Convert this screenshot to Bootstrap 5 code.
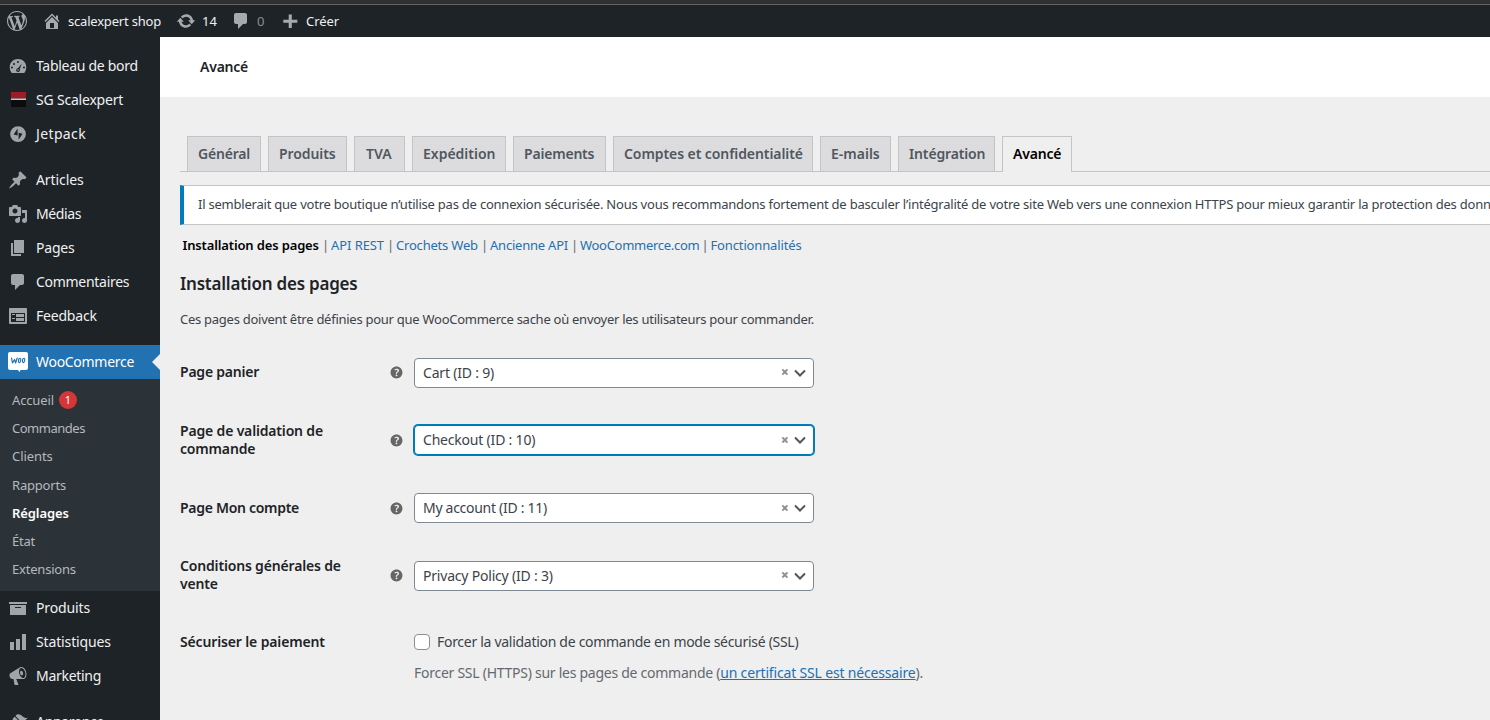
<!DOCTYPE html>
<html lang="fr">
<head>
<meta charset="utf-8">
<meta name="viewport" content="width=device-width, initial-scale=1">
<title>Réglages WooCommerce</title>
<link href="https://cdn.jsdelivr.net/npm/bootstrap@5.3.0/dist/css/bootstrap.min.css" rel="stylesheet">
<style>
  body { font-family: "Noto Sans", "Open Sans", sans-serif; font-size: 13px; line-height: 18px; color: #3c434a; background: #efefef; height: 720px; overflow: hidden; letter-spacing: -.22px; white-space: nowrap; }
  a { color: #2271b1; text-decoration: none; }
  svg { display: block; flex: none; fill: currentColor; }
  /* letter tracking steps */
  .trk-p { letter-spacing: .37px; }
  .trk-0 { letter-spacing: 0; }
  .trk-1 { letter-spacing: -.08px; }
  .trk-2 { letter-spacing: -.14px; }
  .trk-25 { letter-spacing: -.17px; }
  .trk-3 { letter-spacing: -.2px; }
  .trk-35 { letter-spacing: -.265px; }
  .trk-4 { letter-spacing: -.29px; }
  .trk-5 { letter-spacing: -.4px; }
  .trk-6 { letter-spacing: -.48px; }
  .fw-600 { font-weight: 600; }

  .window-edge { height: 5px; background: #303030; border-bottom: 1px solid #636363; }
  .admin-bar { height: 32px; background: #1d2327; color: #f0f0f1; padding-left: 7px; }
  .admin-bar svg { color: #a7aaad; }
  .bar-item { display: flex; align-items: center; gap: 6px; }
  .bar-logo { width: 35px; } .bar-site { width: 134px; } .bar-updates { width: 55px; } .bar-comments { width: 49px; }
  .dimmed { color: #8b8f94; }

  .side { width: 160px; height: 683px; background: #1d2327; padding-top: 12px; overflow: hidden; }
  .side-item { height: 34px; padding-left: 8px; gap: 8px; font-size: 14px; color: #f0f0f1; display: flex; align-items: center; position: relative; }
  .side-item svg { color: #a0a5aa; }
  .side-gap { height: 12px; }
  .side-item.current { background: #2271b1; color: #fff; }
  .side-item.current svg { color: #fff; }
  .side-item.current::after { content: ""; position: absolute; right: 0; top: 9px; border: 8px solid transparent; border-right-color: #efefef; border-left: 0; }
  .submenu { background: #2c3338; padding: 7px 0 0 12px; height: 212px; }
  .submenu a { display: flex; align-items: center; gap: 5px; height: 28.2px; color: #b4b9be; }
  .submenu a.here { color: #fff; }
  .count { width: 18px; height: 18px; border-radius: 9px; background: #d63638; color: #fff; font-size: 11px; display: inline-flex; align-items: center; justify-content: center; }

  .page-head { height: 60px; background: #fff; padding-left: 40px; font-size: 14px; color: #1d2327; }
  .content-area { padding-left: 20px; }
  .tab-row { height: 36px; margin-top: 39px; padding-left: 7px; gap: 7px; border-bottom: 1px solid #c3c4c7; }
  .tab-box { height: 35px; border: 1px solid #c3c4c7; border-bottom: 0; background: #dcdcde; color: #50575e; font-size: 14px; padding-left: 10px; display: flex; align-items: center; }
  .tab-box.open { background: #efefef; height: 36px; color: #000; padding-bottom: 1px; }
  .w-a { width: 74px; } .w-b { width: 79px; } .w-c { width: 51px; padding-left: 11px; } .w-d { width: 94px; } .w-e { width: 93px; }
  .w-f { width: 200px; } .w-g { width: 71px; } .w-h { width: 97px; } .w-i { width: 70px; }
  .tip-bar { height: 40px; margin-top: 13px; background: #fff; border: 1px solid #c3c4c7; border-left: 4px solid #007cba; border-right: 0; padding: 0 0 2px 14px; overflow: hidden; }
  .sections { height: 18px; margin-top: 11px; padding-left: 2.5px; }
  .sections span { display: inline-block; width: 9px; margin-left: -2.5px; color: #646970; }
  .s-a { width: 142px; } .s-b { width: 65px; } .s-c { width: 94px; } .s-d { width: 90px; } .s-e { width: 130.5px; }
  h2 { font-size: 17px; line-height: 24px; margin: 18px 0 0; color: #1d2327; }
  .intro { margin: 14px 0 10.7px; }
  .setting { height: 67.75px; display: flex; align-items: center; font-size: 14px; }
  .setting:last-of-type { margin-top: -1.7px; }
  .setting-label { width: 210px; color: #1d2327; padding-bottom: 1px; }
  .help { width: 24px; color: #666; }
  .help svg { width: 17px; height: 17px; margin-left: -2px; }
  .pick { width: 400px; height: 30px; background: #fff; border: 1px solid #7e8993; border-radius: 4px; padding: 0 7px 0 8px; display: flex; align-items: center; color: #3c434a; }
  .pick svg { width: 12px; height: 8px; fill: none; stroke: #555; stroke-width: 2; }
  .pick.focused { border-color: #007cba; box-shadow: 0 0 0 1px #007cba; }
  .clear { font-size: 14px; font-weight: 900; color: #8f8f8f; margin-right: 5px; letter-spacing: 0; padding-bottom: 1px; }
  .tick { width: 16px; height: 16px; margin: 0 7px 0 0; border: 1px solid #8c8f94; border-radius: 4px; background: #fff; appearance: none; }
  .note { font-size: 14px; color: #646970; padding-left: 234px; margin-top: -12px; }
  .note a { text-decoration: underline; }
</style>
</head>
<body>
<div class="window-edge"></div>
<header class="admin-bar d-flex">
  <div class="bar-item bar-logo"><svg width="20" height="20" viewBox="0 0 20 20"><path d="M20 10c0-5.51-4.49-10-10-10C4.48 0 0 4.49 0 10c0 5.52 4.48 10 10 10 5.51 0 10-4.48 10-10zM7.78 15.37L4.37 6.22c.55-.02 1.17-.08 1.17-.08.5-.06.44-1.13-.06-1.11 0 0-1.45.11-2.37.11-.18 0-.37 0-.58-.01C4.12 2.69 6.87 1.11 10 1.11c2.33 0 4.45.87 6.05 2.34-.68-.11-1.65.39-1.65 1.58 0 .74.45 1.36.9 2.1.35.61.55 1.36.55 2.46 0 1.49-1.4 5-1.4 5l-3.03-8.37c.54-.02.82-.17.82-.17.5-.05.44-1.25-.06-1.22 0 0-1.44.12-2.38.12-.87 0-2.33-.12-2.33-.12-.5-.03-.56 1.2-.06 1.22l.92.08 1.26 3.41zM17.41 10c.24-.64.74-1.87.43-4.25.7 1.29 1.05 2.71 1.05 4.25 0 3.29-1.73 6.24-4.4 7.78.97-2.59 1.94-5.2 2.92-7.78zM6.1 18.09C3.12 16.65 1.11 13.53 1.11 10c0-1.3.23-2.48.72-3.59C3.25 10.3 4.67 14.2 6.1 18.09zm4.03-6.63l2.58 6.98c-.86.29-1.76.45-2.71.45-.79 0-1.57-.11-2.29-.33.81-2.38 1.62-4.74 2.42-7.1z"/></svg></div>
  <div class="bar-item bar-site trk-3"><svg width="20" height="20" viewBox="0 0 20 20"><path d="M16 8.5l1.53 1.53-1.06 1.06L10 4.6l-6.47 6.49-1.06-1.06L10 2.5l4 4v-2h2v4zm-6-2.46l6 5.99V18H4v-5.97zM12 17v-5H8v5h4z"/></svg><span>scalexpert shop</span></div>
  <div class="bar-item bar-updates trk-0"><svg width="20" height="20" viewBox="0 0 20 20"><path d="M10.2 3.28c3.53 0 6.43 2.61 6.92 6h2.08l-3.5 4-3.5-4h2.32c-.45-1.97-2.21-3.45-4.32-3.45-1.45 0-2.73.71-3.54 1.78L4.95 5.66C6.23 4.2 8.11 3.28 10.2 3.28zm-.4 13.44c-3.52 0-6.43-2.61-6.92-6H.8l3.5-4c1.17 1.33 2.33 2.67 3.5 4H5.48c.45 1.97 2.21 3.45 4.32 3.45 1.45 0 2.73-.71 3.54-1.78l1.71 1.95c-1.28 1.46-3.15 2.38-5.25 2.38z"/></svg><span>14</span></div>
  <div class="bar-item bar-comments"><svg width="20" height="20" viewBox="0 0 20 20"><path d="M5 2h9c1.1 0 2 .9 2 2v7c0 1.1-.9 2-2 2h-2l-5 5v-5H5c-1.1 0-2-.9-2-2V4c0-1.1.9-2 2-2z"/></svg><span class="dimmed">0</span></div>
  <div class="bar-item trk-1"><svg width="20" height="20" viewBox="0 0 20 20"><path d="M17.3 8.7v3h-5.500V17H8.700v-5.300H3.300v-3h5.400V3.500h3.100v5.200z"/></svg><span>Créer</span></div>
</header>
<div class="d-flex">
  <nav class="side flex-shrink-0">
    <a class="side-item trk-4" href="#"><svg width="20" height="20" viewBox="0 0 20 20"><path fill-rule="evenodd" d="M3.76 17h12.48c1.34-1.63 2.01-3.82 2.01-6 0-4.55-3.69-8-8.25-8S1.75 6.45 1.75 11c0 2.18.67 4.37 2.01 6zM9 6a1 1 0 1 1 2 0 1 1 0 0 1-2 0zM5 8a1 1 0 1 1 2 0 1 1 0 0 1-2 0zM13.8 7.6l-2 5.3c.5 1.1.1 2.2-.8 2.8-1 .5-2.200.2-2.700-.8-.4-.9 0-2 .9-2.500.3-.1.5-.2.800-.2zM3 11.500a1 1 0 1 1 2 0 1 1 0 0 1-2 0zM15 11.500a1 1 0 1 1 2 0 1 1 0 0 1-2 0zM10 13.200a.8.8 0 1 0 0 1.600.8.8 0 0 0 0-1.600z"/></svg>Tableau de bord</a>
    <a class="side-item trk-3" href="#"><svg width="20" height="20" viewBox="0 0 20 20"><path fill="#9d1c28" d="M3 2h15v6.500H3z"/><path fill="#c9c9cb" d="M3 8.500h15v1.500H3z"/><path fill="#0b0c0e" d="M3 10h15v7H3z"/></svg>SG Scalexpert</a>
    <a class="side-item trk-p" href="#"><svg width="20" height="20" viewBox="0 0 20 20"><path fill-rule="evenodd" d="M10 2.200a7.900 7.900 0 1 0 0 15.800 7.900 7.900 0 0 0 0-15.800zM9.600 4.600v6.800l-4-1zM10.600 8.700l4 1-4 6z"/></svg>Jetpack</a>
    <div class="side-gap"></div>
    <a class="side-item trk-1" href="#"><svg width="20" height="20" viewBox="0 0 20 20"><path d="M10.440 3.020l1.820-1.820 6.360 6.350-1.830 1.820c-1.050-.68-2.480-.57-3.410.36l-.75.75c-.92.93-1.040 2.350-.35 3.410l-1.830 1.820-2.410-2.410-2.800 2.790c-.42.42-3.380 2.710-3.800 2.290s1.860-3.390 2.280-3.810l2.790-2.790L4.100 9.360l1.830-1.820c1.050.69 2.480.57 3.400-.36l.75-.75c.93-.92 1.050-2.350.36-3.410z"/></svg>Articles</a>
    <a class="side-item trk-5" href="#"><svg width="20" height="20" viewBox="0 0 20 20"><path d="M13 11V4c0-.55-.45-1-1-1h-1.670L9 1H5L3.670 3H2c-.55 0-1 .45-1 1v7c0 .55.45 1 1 1h10c.55 0 1-.45 1-1zM7 4.500c1.380 0 2.500 1.120 2.500 2.500S8.380 9.500 7 9.500 4.500 8.380 4.500 7 5.620 4.500 7 4.500zM14 6h5v10.500c0 1.380-1.120 2.500-2.500 2.500S14 17.880 14 16.500s1.120-2.500 2.500-2.500c.17 0 .34.020.5.050V9h-3V6zm-4 8.050V13h2v3.500c0 1.380-1.120 2.500-2.500 2.500S7 17.880 7 16.500 8.120 14 9.500 14c.17 0 .34.020.5.050z"/></svg>Médias</a>
    <a class="side-item trk-3" href="#"><svg width="20" height="20" viewBox="0 0 20 20"><path d="M6 15V2h10v13H6zm-1 1h8v2H3V5h2v11z"/></svg>Pages</a>
    <a class="side-item trk-4" href="#"><svg width="20" height="20" viewBox="0 0 20 20"><path d="M5 2h9c1.100 0 2 .9 2 2v7c0 1.100-.9 2-2 2h-2l-5 5v-5H5c-1.100 0-2-.9-2-2V4c0-1.100.9-2 2-2z"/></svg>Commentaires</a>
    <a class="side-item trk-3" href="#"><svg width="20" height="20" viewBox="0 0 20 20"><path d="M2 2h16c.55 0 1 .45 1 1v14c0 .55-.45 1-1 1H2c-.55 0-1-.45-1-1V3c0-.55.45-1 1-1zm15 14V7H3v9h14zM4 8v1h3V8H4zm4 0v3h8V8H8zm-4 4v1h3v-1H4zm4 0v3h8v-3H8z"/></svg>Feedback</a>
    <div class="side-gap"></div>
    <a class="side-item current trk-4" href="#"><svg width="20" height="20" viewBox="0 0 20 20"><path d="M2 0h16a2 2 0 0 1 2 2v14a2 2 0 0 1-2 2h-5.500l-.7 2-2-2H2a2 2 0 0 1-2-2V2a2 2 0 0 1 2-2z"/><g fill="none" stroke="#2271b1" stroke-width="1.200" stroke-linecap="round" stroke-linejoin="round"><path d="M3.500 6l1 5 2-3.500L7.600 11l1.600-5"/><ellipse cx="11.600" cy="8.400" rx="1.100" ry="2.200" transform="rotate(12 11.600 8.400)"/><ellipse cx="15.600" cy="8.400" rx="1.100" ry="2.200" transform="rotate(12 15.600 8.400)"/></g></svg>WooCommerce</a>
    <div class="submenu">
      <a class="trk-2" href="#">Accueil <span class="count">1</span></a>
      <a class="trk-6" href="#">Commandes</a>
      <a class="trk-1" href="#">Clients</a>
      <a class="trk-3" href="#">Rapports</a>
      <a class="here fw-600 trk-1" href="#">Réglages</a>
      <a class="trk-3" href="#">État</a>
      <a class="trk-3" href="#">Extensions</a>
    </div>
    <a class="side-item trk-2" href="#"><svg width="20" height="20" viewBox="0 0 20 20"><path d="M19 4v2H1V4h18zM2 7h16v10H2V7zm11 3V9H7v1h6z"/></svg>Produits</a>
    <a class="side-item trk-2" href="#"><svg width="20" height="20" viewBox="0 0 20 20"><path d="M18 18V2h-4v16h4zm-6 0V7H8v11h4zm-6 0v-8H2v8h4z"/></svg>Statistiques</a>
    <a class="side-item trk-4" href="#"><svg width="20" height="20" viewBox="0 0 20 20"><path d="M18.150 5.940c.46 1.620.38 3.220-.02 4.480-.42 1.280-1.260 2.180-2.300 2.480-.16.060-.26.060-.4.060-.06.020-.12.020-.18.020-.06.020-.14.020-.22.020h-6.800l2.220 5.500c.02.14-.06.26-.14.34-.08.1-.24.16-.34.16H6.950c-.1 0-.26-.06-.34-.16-.08-.08-.16-.2-.14-.34l-1-5.500H4.250l-.02-.02c-.5.060-1.080-.18-1.540-.62s-.88-1.080-1.060-1.880c-.24-.8-.2-1.560-.02-2.200.18-.62.58-1.080 1.060-1.300l.02-.02 9-5.400c.1-.06.18-.1.240-.16.060-.04.140-.08.240-.12.160-.08.280-.12.500-.18 1.040-.3 2.240.1 3.220.98s1.840 2.240 2.260 3.860zm-2.580 5.980h-.02c.4-.1.740-.34 1.040-.7.580-.7.860-1.760.86-3.040 0-.64-.1-1.300-.28-1.980-.34-1.360-1.020-2.500-1.780-3.240s-1.680-1.100-2.460-.88c-.82.220-1.400.96-1.700 2-.32 1.040-.28 2.360.06 3.720.38 1.360 1 2.500 1.800 3.240.78.740 1.620 1.100 2.480.88zm-2.540-7.080c.22-.04.42-.02.62.04.38.16.76.48 1.020 1s.42 1.200.42 1.780c0 .3-.04.56-.12.8-.18.48-.44.84-.86.94-.34.1-.8-.06-1.140-.4s-.64-.86-.78-1.500c-.18-.62-.12-1.240.02-1.720s.48-.84.82-.94z"/></svg>Marketing</a>
    <div class="side-gap"></div>
    <a class="side-item trk-4" href="#"><svg width="20" height="20" viewBox="0 0 20 20"><path d="M14.480 11.060L7.410 3.990l1.500-1.500c.5-.56 2.300-.47 3.510.32 1.210.8 1.430 1.280 2.910 2.100 1.180.64 2.450 1.260 4.450.85zm-.71.71L6.700 4.700 4.930 6.470c-.39.39-.39 1.020 0 1.410l1.060 1.060c.39.39.39 1.030 0 1.420-.6.6-1.430 1.110-2.210 1.690-.35.260-.7.530-1.010.84C1.430 14.230.4 16.080 1.400 17.070c.99 1 2.840-.03 4.180-1.360.31-.31.58-.66.85-1.020.57-.78 1.080-1.610 1.690-2.210.39-.39 1.020-.39 1.410 0l1.060 1.060c.39.39 1.020.39 1.410 0z"/></svg>Apparence</a>
  </nav>
  <main class="flex-grow-1 overflow-hidden">
    <div class="page-head d-flex align-items-center fw-600">Avancé</div>
    <div class="content-area">
      <div class="tab-row d-flex align-items-start fw-600">
        <a class="tab-box w-a trk-3" href="#">Général</a>
        <a class="tab-box w-b trk-1" href="#">Produits</a>
        <a class="tab-box w-c trk-0" href="#">TVA</a>
        <a class="tab-box w-d trk-0" href="#">Expédition</a>
        <a class="tab-box w-e trk-3" href="#">Paiements</a>
        <a class="tab-box w-f trk-1" href="#">Comptes et confidentialité</a>
        <a class="tab-box w-g trk-0" href="#">E-mails</a>
        <a class="tab-box w-h trk-2" href="#">Intégration</a>
        <a class="tab-box open w-i trk-3" href="#">Avancé</a>
      </div>
      <div class="tip-bar d-flex align-items-center">Il semblerait que votre boutique n’utilise pas de connexion sécurisée. Nous vous recommandons fortement de basculer l’intégralité de votre site Web vers une connexion HTTPS pour mieux garantir la protection des données</div>
      <div class="sections d-flex">
        <a class="s-a fw-600 text-black trk-2" href="#">Installation des pages</a>
        <div class="s-b"><span>|</span><a class="trk-1" href="#">API REST</a></div>
        <div class="s-c"><span>|</span><a class="trk-3" href="#">Crochets Web</a></div>
        <div class="s-d"><span>|</span><a href="#">Ancienne API</a></div>
        <div class="s-e"><span>|</span><a class="trk-4" href="#">WooCommerce.com</a></div>
        <div><span>|</span><a class="trk-2" href="#">Fonctionnalités</a></div>
      </div>
      <h2 class="fw-600">Installation des pages</h2>
      <p class="intro trk-35">Ces pages doivent être définies pour que WooCommerce sache où envoyer les utilisateurs pour commander.</p>
      <section class="setting">
        <div class="setting-label fw-600">Page panier</div>
        <div class="help"><svg viewBox="0 0 20 20"><use href="#help-mark"/></svg></div>
        <div class="pick trk-3"><span class="me-auto">Cart (ID : 9)</span><span class="clear">×</span><svg viewBox="0 0 12 8"><path d="M1 1.500l5 5 5-5"/></svg></div>
      </section>
      <section class="setting">
        <div class="setting-label fw-600 trk-25">Page de validation de<br>commande</div>
        <div class="help"><svg viewBox="0 0 20 20"><use href="#help-mark"/></svg></div>
        <div class="pick focused trk-3"><span class="me-auto">Checkout (ID : 10)</span><span class="clear">×</span><svg viewBox="0 0 12 8"><path d="M1 1.500l5 5 5-5"/></svg></div>
      </section>
      <section class="setting">
        <div class="setting-label fw-600 trk-4">Page Mon compte</div>
        <div class="help"><svg viewBox="0 0 20 20"><use href="#help-mark"/></svg></div>
        <div class="pick trk-4"><span class="me-auto">My account (ID : 11)</span><span class="clear">×</span><svg viewBox="0 0 12 8"><path d="M1 1.500l5 5 5-5"/></svg></div>
      </section>
      <section class="setting">
        <div class="setting-label fw-600 trk-25">Conditions générales de<br>vente</div>
        <div class="help"><svg viewBox="0 0 20 20"><use href="#help-mark"/></svg></div>
        <div class="pick trk-3"><span class="me-auto">Privacy Policy (ID : 3)</span><span class="clear">×</span><svg viewBox="0 0 12 8"><path d="M1 1.500l5 5 5-5"/></svg></div>
      </section>
      <section class="setting">
        <div class="setting-label fw-600 trk-2 pb-0">Sécuriser le paiement</div>
        <div class="help"></div>
        <label class="d-flex align-items-center trk-4"><input class="tick" type="checkbox">Forcer la validation de commande en mode sécurisé (SSL)</label>
      </section>
      <div class="note trk-35">Forcer SSL (HTTPS) sur les pages de commande (<a class="trk-25" href="#">un certificat SSL est nécessaire</a>).</div>
    </div>
  </main>
</div>
<svg width="0" height="0" class="d-none"><defs><path id="help-mark" d="M17 10c0-3.870-3.140-7-7-7-3.870 0-7 3.130-7 7s3.130 7 7 7c3.860 0 7-3.130 7-7zm-6.300 1.480H9.140v-.43c0-.38.080-.7.240-.98s.46-.57.880-.89c.41-.29.680-.53.810-.71.140-.18.200-.39.200-.62 0-.25-.09-.44-.28-.58-.19-.13-.45-.19-.79-.19-.58 0-1.250.15-2 .46l-.64-1.280c.87-.49 1.800-.74 2.770-.74.810 0 1.450.2 1.920.58.480.39.710.91.710 1.550 0 .43-.09.8-.29 1.110-.19.32-.57.67-1.110 1.060-.38.280-.61.490-.71.630-.1.150-.15.340-.15.570v.46zm-1.470 2.740c-.18-.17-.27-.42-.27-.73 0-.33.080-.58.260-.75s.43-.25.770-.25c.32 0 .57.090.75.260s.27.420.27.740c0 .3-.09.550-.27.720-.18.180-.43.270-.75.270-.33 0-.58-.09-.76-.26z"/></defs></svg>
<script src="https://cdn.jsdelivr.net/npm/bootstrap@5.3.0/dist/js/bootstrap.bundle.min.js"></script>
</body>
</html>
